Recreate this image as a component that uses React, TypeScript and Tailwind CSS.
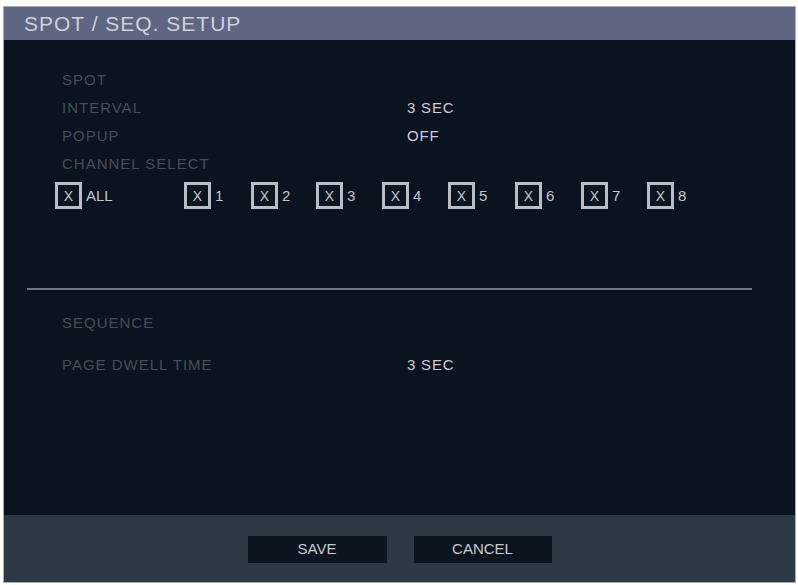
import React from "react";

const font = { fontFamily: '"Liberation Sans", "DejaVu Sans", sans-serif' };

function Box({ label, width }: { label: string; width: string }) {
  return (
    <div className={`flex items-center ${width}`}>
      <div className="w-[27px] h-[27px] border-[3px] border-[#b9bec6] bg-[#0b1622] flex items-center justify-center text-[14px] text-[#c2c6cd] leading-none">
        X
      </div>
      <span className="ml-[4px] text-[15px] text-[#c2c6cd] leading-none">{label}</span>
    </div>
  );
}

function Row({ label, value, extra = "" }: { label: string; value?: string; extra?: string }) {
  return (
    <div className={`flex items-center h-[28px] ${extra}`}>
      <span className="w-[345px] text-[15px] text-[#464d57] tracking-[1px]">{label}</span>
      {value && <span className="text-[15px] text-[#c9cdd4] tracking-[0.8px]">{value}</span>}
    </div>
  );
}

export default function App() {
  return (
    <div className="w-[798px] h-[585px] bg-white pt-[6px] pl-[3px]" style={font}>
      <div className="w-[793px] h-[577px] border border-[#a9adb3] flex flex-col overflow-hidden">
        <div className="h-[33px] bg-[#5e6681] flex items-center pl-[20px] shrink-0">
          <span className="text-[21px] text-[#cdd1dc] tracking-[1px]">SPOT / SEQ. SETUP</span>
        </div>
        <div className="flex-1 bg-[#0a1420] flex flex-col pt-[26px]">
          <div className="pl-[58px]">
            <Row label="SPOT" />
            <Row label="INTERVAL" value="3 SEC" />
            <Row label="POPUP" value="OFF" />
            <Row label="CHANNEL SELECT" />
          </div>
          <div className="flex pl-[51px] mt-[4px]">
            <Box label="ALL" width="w-[129px]" />
            <Box label="1" width="w-[67px]" />
            <Box label="2" width="w-[65px]" />
            <Box label="3" width="w-[66px]" />
            <Box label="4" width="w-[66px]" />
            <Box label="5" width="w-[67px]" />
            <Box label="6" width="w-[66px]" />
            <Box label="7" width="w-[66px]" />
            <Box label="8" width="w-[66px]" />
          </div>
          <div className="mt-[79px] ml-[23px] w-[725px] h-[2px] bg-[#6c7682]" />
          <div className="pl-[58px] mt-[19px]">
            <Row label="SEQUENCE" />
            <Row label="PAGE DWELL TIME" value="3 SEC" extra="mt-[14px]" />
          </div>
        </div>
        <div className="h-[67px] bg-[#2c3844] flex items-center justify-center gap-[27px] shrink-0 pt-[2px]">
          <div className="w-[139px] h-[27px] bg-[#0b1520] flex items-center justify-center text-[15px] text-[#c5c9d0]">
            SAVE
          </div>
          <div className="w-[138px] h-[27px] bg-[#0b1520] flex items-center justify-center text-[15px] text-[#c5c9d0]">
            CANCEL
          </div>
        </div>
      </div>
    </div>
  );
}
